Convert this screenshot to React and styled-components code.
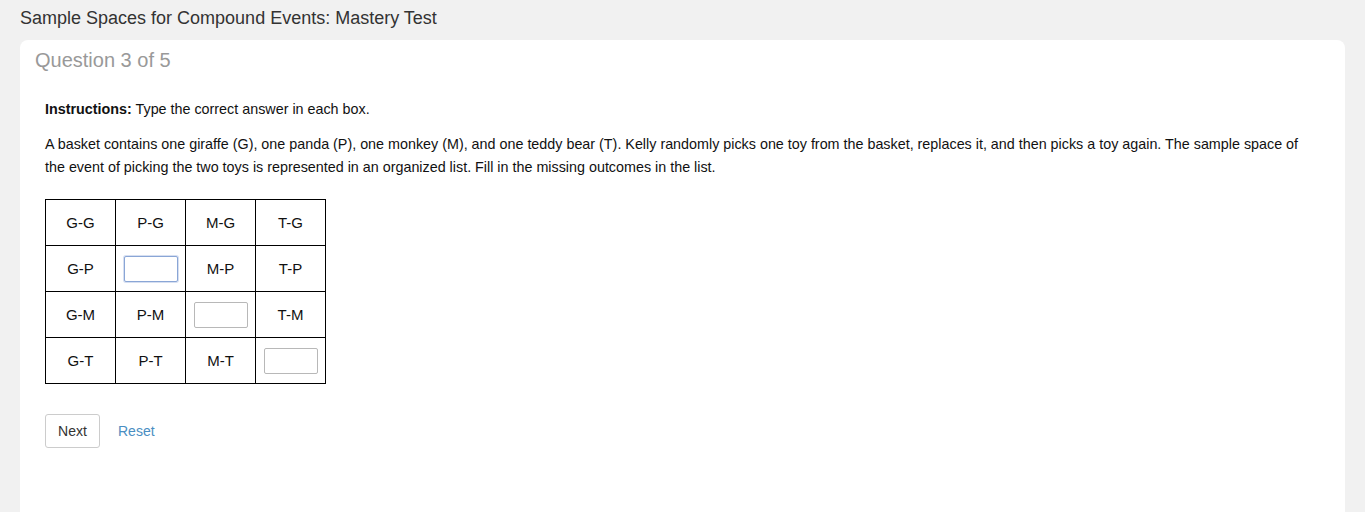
import React from "react";
import styled, { createGlobalStyle } from "styled-components";

const Global = createGlobalStyle`
  html, body { margin: 0; padding: 0; background: #f1f1f1; }
  body { font-family: "Liberation Sans", Arial, sans-serif; color: #333; }
`;

const Page = styled.div`
  padding: 0 20px 0 20px;
  height: 512px;
  overflow: hidden;
`;

const Title = styled.h1`
  margin: 0;
  padding-top: 6px;
  height: 34px;
  font-size: 18px;
  font-weight: normal;
  color: #333;
  line-height: 24px;
`;

const Card = styled.div`
  background: #fff;
  border-radius: 8px;
  padding: 6px 15px 40px 15px;
  min-height: 500px;
`;

const QuestionNum = styled.h2`
  margin: 0;
  font-size: 20px;
  font-weight: normal;
  color: #999;
  line-height: 28px;
`;

const Body = styled.div`
  padding: 25px 10px 0 10px;
  font-size: 14.33px;
  color: #111;
`;

const Instr = styled.p`
  margin: 0 0 14px 0;
  line-height: 20px;
`;

const Para = styled.p`
  margin: 0 0 20px 0;
  line-height: 23px;
`;

const Table = styled.table`
  border-collapse: collapse;
  font-size: 15px;
`;

const Cell = styled.td`
  border: 1px solid #000;
  width: 69px;
  height: 45px;
  padding: 0;
  text-align: center;
  vertical-align: middle;
`;

const Input = styled.input`
  box-sizing: border-box;
  width: 54px;
  height: 26px;
  margin: 0;
  border: 1px solid ${(p) => (p.$focus ? "#8aa6d6" : "#b8b8b8")};
  border-radius: 2px;
  box-shadow: ${(p) => (p.$focus ? "0 0 0 1px rgba(120,150,210,0.3)" : "none")};
  outline: none;
  font: inherit;
  padding: 0 4px;
`;

const Actions = styled.div`
  display: flex;
  align-items: center;
  gap: 18px;
  margin-top: 30px;
`;

const Button = styled.button`
  box-sizing: border-box;
  height: 34px;
  width: 55px;
  background: #fff;
  border: 1px solid #ccc;
  border-radius: 3px;
  font-family: inherit;
  font-size: 14px;
  color: #333;
  padding: 0;
`;

const LinkBtn = styled.a`
  font-size: 14px;
  color: #4a8ec2;
  text-decoration: none;
`;

const rows = [
  ["G-G", "P-G", "M-G", "T-G"],
  ["G-P", null, "M-P", "T-P"],
  ["G-M", "P-M", null, "T-M"],
  ["G-T", "P-T", "M-T", null],
];

export default function App() {
  return (
    <>
      <Global />
      <Page>
        <Title>Sample Spaces for Compound Events: Mastery Test</Title>
        <Card>
          <QuestionNum>Question 3 of 5</QuestionNum>
          <Body>
            <Instr>
              <b>Instructions:</b> Type the correct answer in each box.
            </Instr>
            <Para>
              A basket contains one giraffe (G), one panda (P), one monkey (M), and one teddy bear (T). Kelly randomly picks one toy from the basket, replaces it, and then picks a toy again. The sample space of the event of picking the two toys is represented in an organized list. Fill in the missing outcomes in the list.
            </Para>
            <Table>
              <tbody>
                {rows.map((r, i) => (
                  <tr key={i}>
                    {r.map((c, j) => (
                      <Cell key={j}>
                        {c === null ? <Input $focus={i === 1} /> : c}
                      </Cell>
                    ))}
                  </tr>
                ))}
              </tbody>
            </Table>
            <Actions>
              <Button>Next</Button>
              <LinkBtn href="#">Reset</LinkBtn>
            </Actions>
          </Body>
        </Card>
      </Page>
    </>
  );
}
